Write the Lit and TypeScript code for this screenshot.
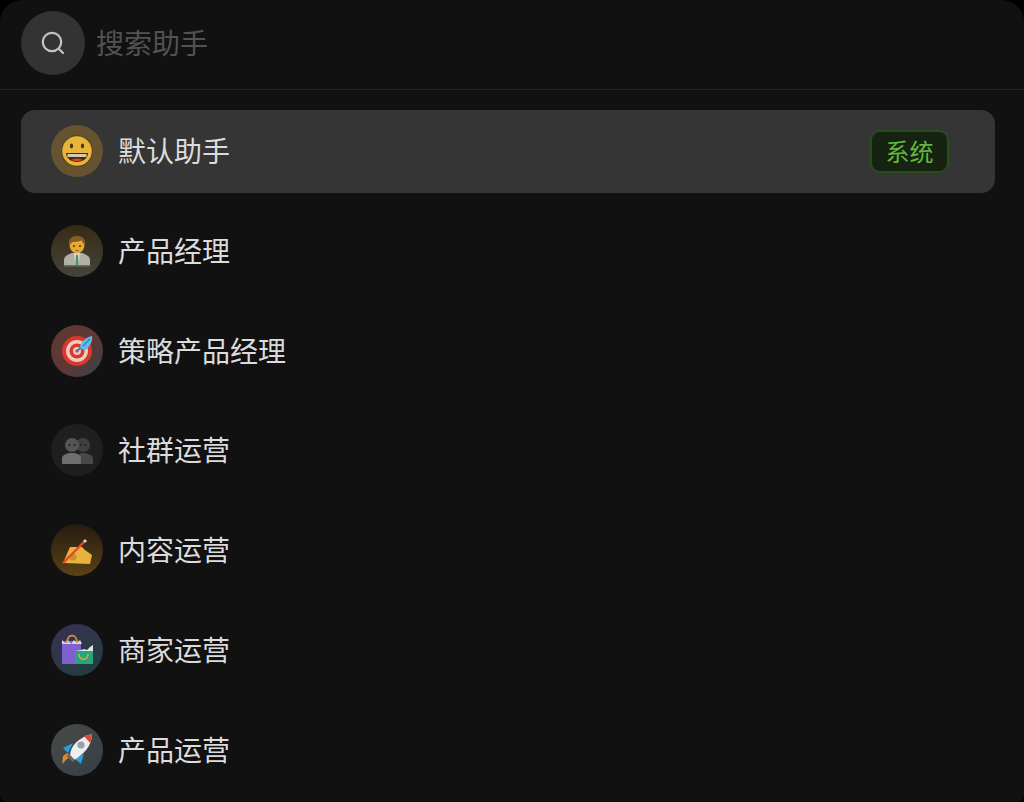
import { LitElement, html, css, svg } from "lit";
import { customElement } from "lit/decorators.js";

const icons: Record<string, unknown> = {
  grin: svg`<circle cx="16" cy="16" r="16" fill="#5a4517"/><circle cx="16" cy="16" r="14.8" fill="#e6b53a"/>
    <ellipse cx="10.5" cy="11" rx="1.6" ry="2.4" fill="#4a3510"/><ellipse cx="21.5" cy="11" rx="1.6" ry="2.4" fill="#4a3510"/>
    <path d="M5 18h22c0 5-5 9-11 9S5 23 5 18z" fill="#4a2a12"/><path d="M6.5 19h19v3h-19z" fill="#cfcabb"/><path d="M10.5 25c3-2 8-2 11 0-3 1.500-8 1.500-11 0z" fill="#d8432c"/>`,
  manager: svg`<path d="M3 31v-6c0-4 5-6 8-7h10c3 1 8 3 8 7v6z" fill="#b0b0a9"/><path d="M13 18h6l-1.500 13h-3z" fill="#d6d6d0"/><path d="M15 20h2l.5 11h-3z" fill="#4e8f6a"/>
    <rect x="3" y="30" width="26" height="1.500" fill="#6d6d68"/>
    <ellipse cx="16" cy="10" rx="7.500" ry="8.500" fill="#e4ab2f"/><path d="M8 10C7 4 11 1 16.500 1S25 5 24 10c-1.500-1-2.500-3-3.500-4.500-3 1.500-7 1.500-9 1.500-1 1-2 2-3.500 3z" fill="#8a5a28"/><circle cx="13" cy="11" r="1" fill="#4a3510"/><circle cx="19" cy="11" r="1" fill="#4a3510"/><path d="M14.500 15.500h3" stroke="#b54a3a" stroke-width="1.200"/>`,
  target: svg`<circle cx="16" cy="16" r="15" fill="#d8392c"/><circle cx="16" cy="16" r="11" fill="#eccac0"/><circle cx="16" cy="16" r="7.500" fill="#d8392c"/><circle cx="16" cy="16" r="4" fill="#eccac0"/><circle cx="16" cy="16" r="1.600" fill="#d8392c"/>
    <path d="M16 16L25 8" stroke="#2f7fb0" stroke-width="1.800"/><path d="M19 12C20 6 26 2 31 1c1 5-2 11-7 14-2 0-4-1-5-3z" fill="#5dbde4"/><path d="M22 11l7-7" stroke="#2f86b8" stroke-width="1.200"/>`,
  people: svg`<circle cx="22" cy="11" r="7" fill="#404040"/><path d="M16 30v-6c0-3 3-5 6-5s10 2 10 5v6z" fill="#484846"/><circle cx="20" cy="11" r="1" fill="#1c1c1c"/><circle cx="24.500" cy="11" r="1" fill="#1c1c1c"/>
    <circle cx="11" cy="11" r="7" fill="#555553"/><path d="M1 30v-6c0-3 5-5 10-5s9 2 9 5v6z" fill="#6e6e6c"/><circle cx="8.500" cy="11" r="1" fill="#1c1c1c"/><circle cx="13.500" cy="11" r="1" fill="#1c1c1c"/>`,
  writing: svg`<path d="M2 29L9 13h12l3 3 7 5-2 9z" fill="#e9b238"/><circle cx="12" cy="23" r="3.500" fill="#c8902c"/>
    <path d="M2 29L23 8" stroke="#dc4a2a" stroke-width="2.400"/><path d="M23 8l2-2" stroke="#cfcfcf" stroke-width="3"/>`,
  bags: svg`<rect x="2" y="8" width="19" height="23" fill="#7e60d0"/><path d="M2 7l3 3 3-3 3 4 3-4 3 3 3-3 2 4H2z" fill="#d9d6ea"/><path d="M7 10C7 0 17 0 17 10" fill="none" stroke="#e0a030" stroke-width="1.600"/>
    <rect x="15" y="18" width="18" height="13" fill="#27a583"/><path d="M15 18l6-1 3-1 3 1 3-3 3-2v6z" fill="#d9e8e0"/><path d="M19 21c0 7 9 7 9 0" fill="none" stroke="#d6ac2e" stroke-width="1.600"/>`,
  rocket: svg`<path d="M10 22l-5 4-4 4 1-8 4-3z" fill="#d98a35"/><path d="M12 9L2 14l5 5zM23 20l-3 10-6-5z" fill="#2d9fd8"/><path d="M9 22C9 11 19 3 31 0c0 12-9 21-18 26z" fill="#e9eef0"/><path d="M23 2l8-2c0 3-.5 6-2 9z" fill="#dc4a33"/><circle cx="20" cy="11" r="3.600" fill="#9aa0a3"/><path d="M8 20l6 6-2.500 2-6-6z" fill="#666"/>`,
};

const rows = [
  { name: "默认助手", icon: "grin", bg: "#655332", system: true, size: 32 },
  { name: "产品经理", icon: "manager", bg: "linear-gradient(180deg, #372b14, #45433c)", size: 32 },
  { name: "策略产品经理", icon: "target", bg: "linear-gradient(135deg, #5f3733 55%, #33434d)", size: 32 },
  { name: "社群运营", icon: "people", bg: "#1f1f1f", size: 32 },
  { name: "内容运营", icon: "writing", bg: "linear-gradient(180deg, #251b10, #5a4218)", size: 32 },
  { name: "商家运营", icon: "bags", bg: "linear-gradient(150deg, #3a3055, #1f3f3c)", size: 34 },
  { name: "产品运营", icon: "rocket", bg: "linear-gradient(135deg, #4a4a4a, #334045)", size: 32 },
];

@customElement("app-root")
export class AppRoot extends LitElement {
  static styles = css`
    :host {
      display: block;
      width: 1024px;
      height: 802px;
      background: #000;
      font-family: "Liberation Sans", "Noto Sans CJK SC", sans-serif;
      overflow: hidden;
    }
    .panel {
      height: 802px;
      box-sizing: border-box;
      background: #111111;
      border-radius: 22px 22px 6px 6px;
      overflow: hidden;
    }
    .search {
      height: 90px;
      box-sizing: border-box;
      padding: 11px 21px 0;
      display: flex;
      gap: 11px;
      border-bottom: 1px solid #222222;
    }
    .search-btn {
      width: 64px;
      height: 64px;
      border-radius: 50%;
      background: #333333;
      display: flex;
      align-items: center;
      justify-content: center;
    }
    .search-text {
      height: 64px;
      line-height: 68px;
      font-size: 28px;
      color: #525252;
    }
    .list {
      padding: 19.6px 29px 0 21px;
      display: flex;
      flex-direction: column;
      gap: 16.7px;
    }
    .row {
      height: 83.1px;
      flex: none;
      box-sizing: border-box;
      padding: 0 46px 0 30px;
      display: flex;
      align-items: center;
      border-radius: 14px;
    }
    .row.active {
      background: #353535;
    }
    .avatar {
      width: 52px;
      height: 52px;
      border-radius: 50%;
      flex: none;
      display: flex;
      align-items: center;
      justify-content: center;
      margin-right: 15px;
    }
    .name {
      flex: 1;
      font-size: 28px;
      color: #dcdcdc;
      padding-bottom: 2px;
    }
    .badge {
      width: 79px;
      height: 43px;
      box-sizing: border-box;
      border: 2px solid #274d1a;
      border-radius: 10px;
      background: #162312;
      color: #62b83a;
      font-size: 24px;
      padding-bottom: 2px;
      display: flex;
      align-items: center;
      justify-content: center;
    }
  `;

  render() {
    return html`<div class="panel">
      <div class="search">
        <div class="search-btn">
          <svg width="26" height="26" viewBox="0 0 26 26" fill="none" stroke="#c4c4c4" stroke-width="2.2" stroke-linecap="round">
            <circle cx="12" cy="12" r="9.2"></circle>
            <path d="M19 19l4 4"></path>
          </svg>
        </div>
        <div class="search-text">搜索助手</div>
      </div>
      <div class="list">
        ${rows.map(
          (r) => html`<div class="row ${r.system ? "active" : ""}">
            <div class="avatar" style="background:${r.bg}">
              <svg width="${r.size}" height="${r.size}" viewBox="0 0 ${r.size} ${r.size}">${icons[r.icon]}</svg>
            </div>
            <div class="name">${r.name}</div>
            ${r.system ? html`<div class="badge">系统</div>` : ""}
          </div>`
        )}
      </div>
    </div>`;
  }
}
